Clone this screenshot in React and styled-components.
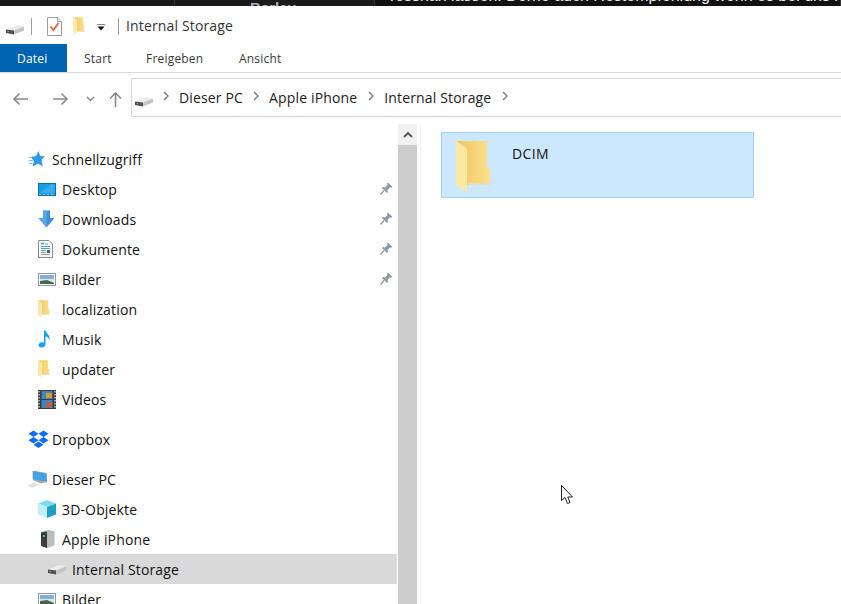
import React from "react";
import styled, { createGlobalStyle } from "styled-components";

const GlobalStyle = createGlobalStyle`
  html, body {
    margin: 0;
    padding: 0;
    background: #fff;
  }
  body {
    font-family: "Open Sans", "Noto Sans", "Liberation Sans", sans-serif;
    color: #111;
  }
`;

const Page = styled.div`
  position: relative;
  width: 841px;
  height: 604px;
  overflow: hidden;
  background: #fff;
  display: flex;
  flex-direction: column;
`;

const Strip = styled.div`
  height: 6px;
  flex: none;
  display: flex;
  overflow: hidden;
  background: #151515;
`;

const StripCell = styled.div`
  width: ${props => props.$width || "auto"};
  flex: ${props => (props.$width ? "none" : "1")};
  min-width: 0;
  padding-left: ${props => props.$pad || 0}px;
  box-sizing: border-box;
  border-right: 1px solid #333;
  background: ${props => props.$bg || "#1a1a1a"};
  white-space: nowrap;
  overflow: hidden;
`;

const StripText = styled.div`
  margin-top: ${props => (props.$bold ? "-2px" : "-14px")};
  font-size: ${props => (props.$bold ? "15px" : "16px")};
  line-height: 20px;
  font-weight: ${props => (props.$bold ? 700 : 400)};
  color: ${props => (props.$bold ? "#a9b4c6" : "#eee")};
  font-family: "Liberation Sans", sans-serif;
`;

const TitleBar = styled.div`
  height: 38px;
  flex: none;
  display: flex;
  align-items: center;
  padding-left: 6px;
  padding-top: 2px;
  box-sizing: border-box;
`;

const TitleDivider = styled.div`
  width: 1px;
  height: 17px;
  background: #a0a0a0;
  margin-left: ${props => props.$left}px;
`;

const TitleIcon = styled.div`
  display: flex;
  margin-left: ${props => props.$left || 0}px;
  margin-top: ${props => props.$top || 0}px;
`;

const WindowTitle = styled.div`
  margin-left: 7px;
  font-size: 14px;
  letter-spacing: 0.15px;
  line-height: 20px;
  color: #333;
`;

const Tabs = styled.div`
  height: 29px;
  flex: none;
  box-sizing: border-box;
  display: flex;
  border-bottom: 1px solid #dadada;
`;

const Tab = styled.div`
  height: 28px;
  display: flex;
  align-items: center;
  font-size: 12px;
  letter-spacing: 0.2px;
  color: ${props => (props.$active ? "#fff" : "#3a3a3a")};
  background: ${props => (props.$active ? "#0063b1" : "transparent")};
  width: ${props => props.$width}px;
  padding-left: ${props => props.$pad}px;
  box-sizing: border-box;
`;

const NavRow = styled.div`
  height: 44px;
  flex: none;
  display: flex;
  align-items: flex-start;
`;

const NavButtons = styled.div`
  width: 131px;
  height: 44px;
  flex: none;
  display: flex;
  align-items: center;
  padding-left: 12px;
  box-sizing: border-box;
  padding-top: 8px;
`;

const NavIcon = styled.div`
  display: flex;
  margin-right: ${props => props.$right}px;
`;

const AddressBox = styled.div`
  flex: 1;
  height: 39px;
  margin-top: 5px;
  margin-right: -4px;
  box-sizing: border-box;
  border: 1px solid #d9d9d9;
  display: flex;
  align-items: center;
  padding-left: 3px;
`;

const Crumb = styled.div`
  font-size: 14px;
  letter-spacing: 0.15px;
  color: #222;
  line-height: 20px;
`;

const CrumbChevron = styled.div`
  display: flex;
  margin: -3px ${props => props.$right}px 0 ${props => props.$left}px;
`;

const Main = styled.div`
  flex: 1;
  display: flex;
  min-height: 0;
`;

const Sidebar = styled.div`
  width: 397px;
  flex: none;
  padding-top: 27px;
  box-sizing: border-box;
  overflow: hidden;
`;

const NavGroup = styled.div`
  margin-bottom: 10px;
`;

const Row = styled.div`
  height: 30px;
  display: flex;
  align-items: center;
  padding-left: ${props => 28 + props.$level * 10}px;
  padding-right: 4px;
  box-sizing: border-box;
  background: ${props => (props.$selected ? "#d9d9d9" : "transparent")};
`;

const RowIcon = styled.div`
  width: 24px;
  flex: none;
  display: flex;
  align-items: center;
`;

const RowLabel = styled.div`
  margin-top: 1px;
  font-size: 14px;
  letter-spacing: 0.15px;
  line-height: 20px;
  color: #111;
  white-space: nowrap;
`;

const Pin = styled.div`
  display: flex;
  margin-left: auto;
  margin-top: -2px;
`;

const ScrollBar = styled.div`
  width: 19px;
  flex: none;
  margin: 7px 0 0 1px;
  display: flex;
  flex-direction: column;
`;

const ScrollButton = styled.div`
  height: 21px;
  flex: none;
  background: #f0f0f0;
  display: flex;
  align-items: center;
  justify-content: center;
`;

const ScrollThumb = styled.div`
  flex: 1;
  background: #cdcdcd;
`;

const Content = styled.div`
  flex: 1;
  margin: 7px 0 0 3px;
  border-left: 1px solid #f1f1f1;
  padding: 8px 0 0 20px;
`;

const Tile = styled.div`
  width: 313px;
  height: 66px;
  box-sizing: border-box;
  background: #cce8ff;
  border: 1px solid #99d1ff;
  display: flex;
  align-items: flex-start;
  padding: 8px 0 0 14px;
`;

const TileLabel = styled.div`
  margin: 3px 0 0 20px;
  font-size: 14px;
  letter-spacing: 0.4px;
  line-height: 20px;
  color: #111;
`;

const Cursor = styled.div`
  position: absolute;
  left: 561px;
  top: 485px;
  display: flex;
`;

const DriveIcon = ({ width = 18 }) => (
  <svg width={width} height={(width * 12) / 18} viewBox="0 0 18 12">
    <polygon points="0,6.5 11,2 18,3.5 8,7.5" fill="#ececec" />
    <polygon points="0,6.5 8,7.5 8,11.5 0,10" fill="#4f4f4f" />
    <polygon points="8,7.5 18,3.5 18,7.5 8,11.5" fill="#c4c4c4" />
    <rect x="1.5" y="8" width="1.5" height="1" fill="#5fbf5f" />
  </svg>
);

const FolderIcon = ({ width = 12, height = 18, id }) => (
  <svg width={width} height={height} viewBox="0 0 36 52">
    <defs>
      <linearGradient id={id} x1="0" x2="1" y1="0" y2="0">
        <stop offset="0" stopColor="#efc65f" />
        <stop offset="1" stopColor="#fbe08f" />
      </linearGradient>
    </defs>
    <polygon points="0,0 31,0 31,26 34,28 34,42 11,42 11,8" fill={`url(#${id})`} />
    <polygon points="0,0 11,8 11,51 0,44" fill="#fee8a2" />
    <polygon points="11,42 36,42 34,44 11,44" fill="#e4dcc0" />
  </svg>
);

const CheckDocIcon = () => (
  <svg width="15" height="19" viewBox="0 0 15 19">
    <path d="M0.5 0.5H10.5L14.5 4.5V18.5H0.5Z" fill="#fff" stroke="#9c9c9c" />
    <path d="M10.5 0.5V4.5H14.5" fill="#eee" stroke="#9c9c9c" />
    <path d="M3.5 9.5L6.5 13L11.5 6" fill="none" stroke="#e8602c" strokeWidth="1.7" />
  </svg>
);

const StarIcon = () => (
  <svg width="17" height="16" viewBox="0 0 17 16">
    <polygon points="10.5,0 12.2,5 17,5.4 13.6,8.8 14.8,15.5 10,12.5 4.6,15.5 6,10 2.6,6 8,5" fill="#2f9ae8" />
    <path d="M1 6.5H3.5M0.5 9.5H5M1 12.5H4.5" stroke="#86c2ee" strokeWidth="1" />
  </svg>
);

const DesktopIcon = () => (
  <svg width="18" height="13" viewBox="0 0 18 13">
    <rect x="0.5" y="0.5" width="17" height="12" fill="#1b9be8" stroke="#0f6db0" />
    <polygon points="2,10 13,1.5 16.5,1.5 16.5,10" fill="#38aef0" />
    <path d="M1.5 11.5H16.5" stroke="#e6f4fd" strokeWidth="1" strokeDasharray="1 3" />
  </svg>
);

const DownloadIcon = () => (
  <svg width="17" height="18" viewBox="0 0 17 18">
    <path d="M5 0.5H12V8H16.5L8.5 17.5L0.5 8H5Z" fill="#3d90de" />
    <path d="M5 0.5H8.5V17.5L0.5 8H5Z" fill="#5aa7e8" />
  </svg>
);

const DocIcon = () => (
  <svg width="15" height="18" viewBox="0 0 15 18">
    <path d="M0.5 0.5H11L14.5 4V17.5H0.5Z" fill="#f8f8f8" stroke="#8f8f8f" />
    <path d="M3 3.5H6" stroke="#3f8fd6" strokeWidth="1.5" />
    <path d="M7 4H10M3 6.5H12M3 8.5H12" stroke="#4ba0e0" strokeWidth="1" />
    <path d="M3 10.5H8M3 12.5H8M3 14.5H12" stroke="#9a9a9a" strokeWidth="1" />
    <rect x="9" y="10" width="3" height="3" fill="#44647e" />
  </svg>
);

const PictureIcon = () => (
  <svg width="18" height="13" viewBox="0 0 18 13">
    <rect x="0.5" y="0.5" width="17" height="12" fill="#fff" stroke="#8f9aa5" />
    <rect x="2" y="2" width="14" height="5" fill="#7fb1dc" />
    <rect x="2" y="6" width="14" height="5" fill="#dfe8d8" />
    <polygon points="2,8 9,7 16,10 16,11 2,11" fill="#47664d" />
  </svg>
);

const MusicIcon = () => (
  <svg width="13" height="18" viewBox="0 0 13 18">
    <path d="M6 0.5H7.5C8 3.5 12.5 5 11.5 10C10.8 8 9 6.5 7.5 6.5V14.5C7.5 16.5 5.5 17.5 3.5 17.5C1.5 17.5 0.5 16.4 0.5 15C0.5 13.3 2.5 12.2 4.2 12.2C4.9 12.2 5.5 12.3 6 12.6Z" fill="#16a3f0" />
  </svg>
);

const VideoIcon = () => (
  <svg width="18" height="19" viewBox="0 0 18 19">
    <rect x="0" y="0" width="18" height="19" fill="#3a3a3a" />
    <path d="M1 1V18M17 1V18" stroke="#d8d8d8" strokeWidth="1.4" strokeDasharray="1.5 1.5" />
    <rect x="3.5" y="1" width="11" height="8" fill="#3f83c4" />
    <rect x="3.5" y="10" width="11" height="8" fill="#3f83c4" />
    <rect x="8" y="3" width="6" height="5" fill="#d99a3a" />
    <rect x="8" y="12" width="6" height="5" fill="#c95a38" />
  </svg>
);

const DropboxIcon = () => (
  <svg width="21" height="19" viewBox="0 0 21 19">
    <path d="M5.5 0.5L10.5 3.7L5.5 7L0.5 3.7ZM15.5 0.5L20.5 3.7L15.5 7L10.5 3.7ZM5.5 7L10.5 10.3L5.5 13.5L0.5 10.3ZM15.5 7L20.5 10.3L15.5 13.5L10.5 10.3ZM5.5 14.7L10.5 11.5L15.5 14.7L10.5 18Z" fill="#0f6cf5" />
  </svg>
);

const PcIcon = () => (
  <svg width="20" height="17" viewBox="0 0 20 17" style={{ marginLeft: "-1px" }}>
    <polygon points="6,0 19.5,2.5 19.5,11 6,8.5" fill="#3fa4e6" stroke="#7f95a8" strokeWidth="0.7" />
    <polygon points="19.5,11 14,12.5 8,10 6,8.5" fill="#9ea6ae" />
    <polygon points="0,14.5 7,11.5 13,13.5 5,17" fill="#e2e2e2" />
  </svg>
);

const CubeIcon = () => (
  <svg width="18" height="18" viewBox="0 0 18 18">
    <polygon points="9,0 18,3.5 9,7 0,3.5" fill="#7fdcea" />
    <polygon points="0,3.5 9,7 9,18 0,14.5" fill="#bff0f2" />
    <polygon points="18,3.5 9,7 9,18 18,14.5" fill="#1f9fc4" />
  </svg>
);

const PhoneIcon = () => (
  <svg width="15" height="18" viewBox="0 0 15 18" style={{ marginLeft: "2px" }}>
    <polygon points="1,2 8,0 14.5,1 14.5,15.5 7,18 1,16" fill="#bcbcbc" />
    <polygon points="1,2.5 7,1.5 7,18 1,16" fill="#3c3c3c" />
    <rect x="3" y="5" width="2" height="2" fill="#4fc46a" />
  </svg>
);

const PinIcon = () => (
  <svg width="13" height="13" viewBox="0 0 13 13">
    <path d="M8 0.5L12.5 5L11 5.8L9.8 5.5L7.5 8L8 10L7 11L2 6L3 5L5 5.5L7.4 3L7.2 1.6Z" fill="#8f9aa5" />
    <path d="M4 8.5L0.5 12.5" stroke="#8f9aa5" strokeWidth="1.3" />
  </svg>
);

const ChevronRight = () => (
  <svg width="6" height="10" viewBox="0 0 6 10">
    <path d="M1 1L5 5L1 9" fill="none" stroke="#808080" strokeWidth="1.5" />
  </svg>
);

const items = [
  [
    { label: "Schnellzugriff", level: 0, icon: <StarIcon /> },
    { label: "Desktop", level: 1, icon: <DesktopIcon />, pinned: true },
    { label: "Downloads", level: 1, icon: <DownloadIcon />, pinned: true },
    { label: "Dokumente", level: 1, icon: <DocIcon />, pinned: true },
    { label: "Bilder", level: 1, icon: <PictureIcon />, pinned: true },
    { label: "localization", level: 1, icon: <FolderIcon id="fa" /> },
    { label: "Musik", level: 1, icon: <MusicIcon /> },
    { label: "updater", level: 1, icon: <FolderIcon id="fb" /> },
    { label: "Videos", level: 1, icon: <VideoIcon /> }
  ],
  [{ label: "Dropbox", level: 0, icon: <DropboxIcon /> }],
  [
    { label: "Dieser PC", level: 0, icon: <PcIcon /> },
    { label: "3D-Objekte", level: 1, icon: <CubeIcon /> },
    { label: "Apple iPhone", level: 1, icon: <PhoneIcon /> },
    { label: "Internal Storage", level: 2, icon: <DriveIcon />, selected: true },
    { label: "Bilder", level: 1, icon: <PictureIcon /> }
  ]
];

const App = () => (
  <Page>
    <GlobalStyle />
    <Strip>
      <StripCell $width="175px" />
      <StripCell $width="200px" $pad={75}>
        <StripText $bold>Berlay</StripText>
      </StripCell>
      <StripCell $bg="#111" $pad={12}>
        <StripText>Tesshan lassen. Derrie auch Restempfehlung wenn es bei uns nicht</StripText>
      </StripCell>
    </Strip>

    <TitleBar>
      <TitleIcon $top={6}>
        <DriveIcon />
      </TitleIcon>
      <TitleDivider $left={7} />
      <TitleIcon $left={15}>
        <CheckDocIcon />
      </TitleIcon>
      <TitleIcon $left={11}>
        <FolderIcon id="ft" width={12} height={18} />
      </TitleIcon>
      <TitleIcon $left={12} $top={2}>
        <svg width="8" height="7" viewBox="0 0 8 7">
          <path d="M0 0H8" stroke="#111" strokeWidth="1" />
          <polygon points="0.5,2.5 7.5,2.5 4,6.5" fill="#111" />
        </svg>
      </TitleIcon>
      <TitleDivider $left={13} />
      <WindowTitle>Internal Storage</WindowTitle>
    </TitleBar>

    <Tabs>
      <Tab $active $width={67} $pad={17}>
        Datei
      </Tab>
      <Tab $width={79} $pad={17}>
        Start
      </Tab>
      <Tab $width={93}>Freigeben</Tab>
      <Tab>Ansicht</Tab>
    </Tabs>

    <NavRow>
      <NavButtons>
        <NavIcon $right={23}>
          <svg width="17" height="14" viewBox="0 0 17 14">
            <path d="M16 7H2M7.5 1.5L2 7L7.5 12.5" fill="none" stroke="#8a8a8a" strokeWidth="1.6" />
          </svg>
        </NavIcon>
        <NavIcon $right={17}>
          <svg width="17" height="14" viewBox="0 0 17 14">
            <path d="M1 7H15M9.5 1.5L15 7L9.5 12.5" fill="none" stroke="#8a8a8a" strokeWidth="1.6" />
          </svg>
        </NavIcon>
        <NavIcon $right={14}>
          <svg width="9" height="6" viewBox="0 0 9 6">
            <path d="M1 1L4.5 4.5L8 1" fill="none" stroke="#8a8a8a" strokeWidth="1.5" />
          </svg>
        </NavIcon>
        <NavIcon $right={0}>
          <svg width="13" height="16" viewBox="0 0 13 16">
            <path d="M6.5 16V2M1 7.5L6.5 2L12 7.5" fill="none" stroke="#8a8a8a" strokeWidth="1.6" />
          </svg>
        </NavIcon>
      </NavButtons>
      <AddressBox>
        <TitleIcon $top={6}>
          <DriveIcon />
        </TitleIcon>
        <CrumbChevron $left={10} $right={10}>
          <ChevronRight />
        </CrumbChevron>
        <Crumb>Dieser PC</Crumb>
        <CrumbChevron $left={10} $right={10}>
          <ChevronRight />
        </CrumbChevron>
        <Crumb>Apple iPhone</Crumb>
        <CrumbChevron $left={11} $right={10}>
          <ChevronRight />
        </CrumbChevron>
        <Crumb>Internal Storage</Crumb>
        <CrumbChevron $left={11} $right={10}>
          <ChevronRight />
        </CrumbChevron>
      </AddressBox>
    </NavRow>

    <Main>
      <Sidebar>
        {items.map((group, i) => (
          <NavGroup key={i}>
            {group.map(item => (
              <Row key={item.label} $level={item.level} $selected={item.selected}>
                <RowIcon>{item.icon}</RowIcon>
                <RowLabel>{item.label}</RowLabel>
                {item.pinned ? (
                  <Pin>
                    <PinIcon />
                  </Pin>
                ) : null}
              </Row>
            ))}
          </NavGroup>
        ))}
      </Sidebar>
      <ScrollBar>
        <ScrollButton>
          <svg width="10" height="7" viewBox="0 0 10 7">
            <path d="M1 6L5 2L9 6" fill="none" stroke="#505050" strokeWidth="1.8" />
          </svg>
        </ScrollButton>
        <ScrollThumb />
      </ScrollBar>
      <Content>
        <Tile>
          <FolderIcon id="fbig" width={36} height={52} />
          <TileLabel>DCIM</TileLabel>
        </Tile>
      </Content>
    </Main>

    <Cursor>
      <svg width="13" height="20" viewBox="0 0 13 20">
        <path d="M0.5 0.5V15.5L4 12.5L6.5 18.5L9 17.5L6.7 12H11.5Z" fill="#fff" stroke="#222" strokeWidth="1" />
      </svg>
    </Cursor>
  </Page>
);

export default App;
